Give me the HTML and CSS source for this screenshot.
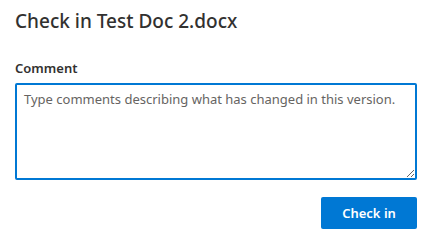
FILE: index.html
```html
<!DOCTYPE html>
<html>
 <head>
  <meta charset="utf-8">
  <title>Check in</title>
  <link rel="stylesheet" href="styles.css">
 </head>
 <body>
  <div class="dialog">
    <h1 class="title">Check in Test Doc 2.docx</h1>
    <label class="label" for="comment">Comment</label>
    <textarea id="comment" class="comment" placeholder="Type comments describing what has changed in this version." autofocus></textarea>
    <div class="actions">
      <button class="submit">Check in</button>
    </div>
  </div>
 </body>
</html>
```

FILE: styles.css
```css
* {
  margin: 0;
  padding: 0;
  box-sizing: border-box;
}
body {
  background: #fff;
  font-family: "Noto Sans", "Open Sans", sans-serif;
  color: #323130;
}
.dialog {
  padding: 7px 10px 0 15px;
  display: flex;
  flex-direction: column;
}
.title {
  font-size: 19px;
  line-height: 28px;
  font-weight: 500;
  color: #323130;
}
.label {
  margin-top: 23px;
  font-size: 13px;
  line-height: 20px;
  font-weight: 600;
}
.comment {
  margin-top: 5px;
  height: 97px;
  width: 100%;
  border: 2px solid #0078d4;
  border-radius: 2px;
  padding: 4px 7px;
  font-family: inherit;
  font-size: 13px;
  line-height: 20px;
  color: #323130;
  outline: none;
  resize: vertical;
}
.comment::placeholder {
  color: #666462;
}
.actions {
  display: flex;
  justify-content: flex-end;
  margin-top: 17px;
}
.submit {
  width: 96px;
  height: 32px;
  border: none;
  border-radius: 2px;
  background-color: #0078d4;
  color: #fff;
  font-family: inherit;
  font-size: 13px;
  font-weight: 600;
}
```
